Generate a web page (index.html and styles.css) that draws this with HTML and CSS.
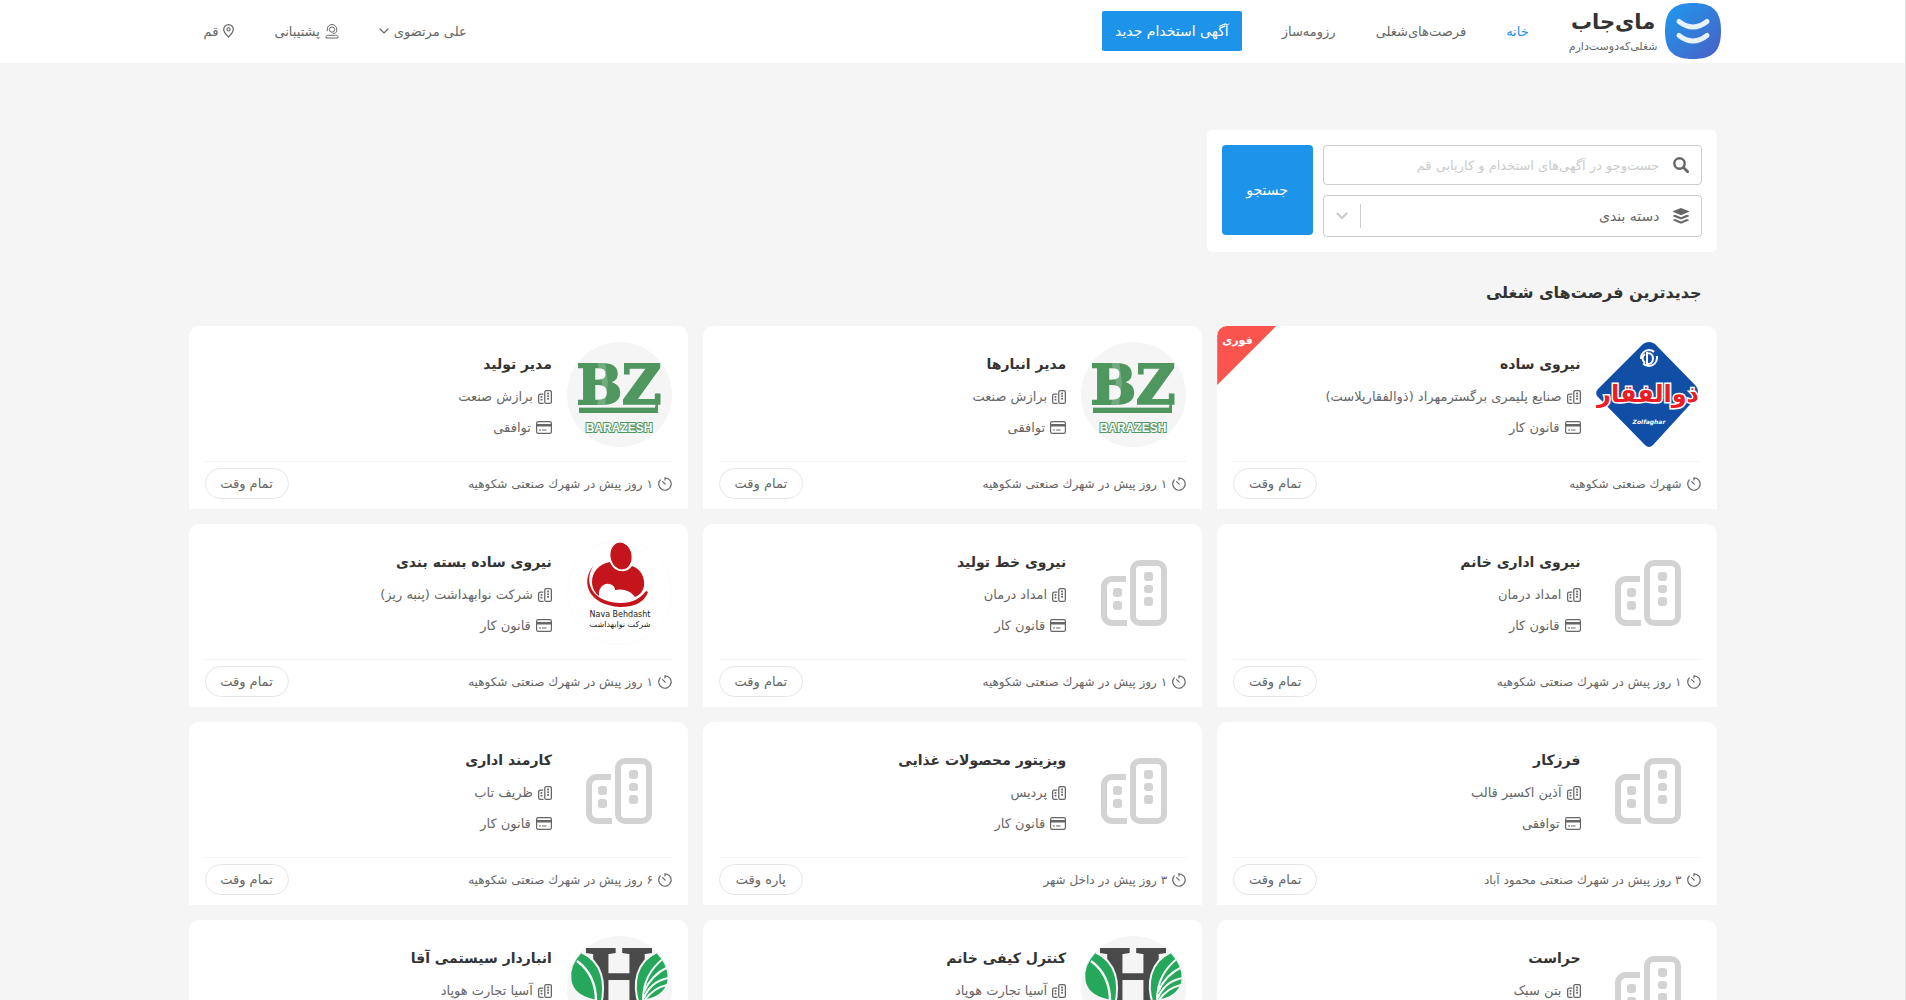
FILE: index.html
```html
<!DOCTYPE html>
<html lang="fa" dir="rtl">
  <head>
    <meta charset="UTF-8" />
    <meta name="viewport" content="width=device-width, initial-scale=1.0" />
    <title>مای‌جاب</title>
    <link rel="stylesheet" href="styles.css">
  </head>
  <body>
    <!-- icons and company logos -->
    <svg class="sprite" aria-hidden="true">
      <defs>
        <linearGradient id="brand-fill" x1="0" y1="0" x2="1" y2="1">
          <stop offset="0" stop-color="#1d9bf0" />
          <stop offset="1" stop-color="#4a5fc4" />
        </linearGradient>
        <clipPath id="round"><circle cx="52.5" cy="52.5" r="52.5" /></clipPath>
      </defs>
      <symbol id="building" viewBox="0 0 66 66">
        <g fill="none" stroke="currentColor" stroke-width="6">
          <rect x="32" y="3" width="31" height="60" rx="7" />
          <path d="M25 19H11a8 8 0 0 0-8 8v28a8 8 0 0 0 8 8h15" />
        </g>
        <g fill="currentColor">
          <rect x="43" y="12" width="9" height="9" rx="3" />
          <rect x="43" y="25" width="9" height="8" rx="3" />
          <rect x="43" y="37" width="9" height="9" rx="3" />
          <rect x="12" y="28" width="9" height="9" rx="3" />
          <rect x="12" y="41" width="9" height="9" rx="3" />
        </g>
      </symbol>
      <symbol id="card" viewBox="0 0 16 13">
        <rect x=".6" y=".6" width="14.8" height="11.8" rx="1.6" fill="none" stroke="currentColor" stroke-width="1.2" />
        <path d="M1 3h14v2.4H1zM3 8.5h2v1.1H3zM6 8.5h4.5v1.1H6z" fill="currentColor" />
      </symbol>
      <symbol id="clock" viewBox="0 0 14 14">
        <path d="M7 3V.8a6.2 6.2 0 1 1-4.7 2.1M7.2 7.2L4.6 4.6" fill="none" stroke="currentColor" stroke-width="1.2" stroke-linecap="round" />
      </symbol>
      <symbol id="pin" viewBox="0 0 11 14">
        <path d="M5.5 13.2C3.2 10.4.7 8.1.7 5.4a4.8 4.8 0 0 1 9.6 0c0 2.7-2.5 5-4.8 7.8z" fill="none" stroke="currentColor" stroke-width="1.2" />
        <circle cx="5.5" cy="5.4" r="1.6" fill="none" stroke="currentColor" stroke-width="1.1" />
      </symbol>
      <symbol id="support" viewBox="0 0 14 15">
        <g fill="none" stroke="currentColor">
          <circle cx="7" cy="5.6" r="2.6" />
          <path d="M2.3 7.2V5.2a4.7 4.7 0 0 1 9.4 0v2M11.5 7.2c0 1.4-1.5 2.3-3.5 2.3M1 14v-.6c0-1.4 1-2.1 2.4-2.1h7.2c1.4 0 2.4.7 2.4 2.1v.6z" />
        </g>
      </symbol>
      <symbol id="chevron" viewBox="0 0 10 6">
        <path d="M1 1l4 4 4-4" fill="none" stroke="currentColor" stroke-width="1.2" stroke-linecap="round" />
      </symbol>
      <symbol id="chevron-bold" viewBox="0 0 12 8">
        <path d="M1.5 1.5L6 6l4.5-4.5" fill="none" stroke="currentColor" stroke-width="2.2" stroke-linecap="round" />
      </symbol>
      <symbol id="search" viewBox="0 0 16 16">
        <circle cx="6.5" cy="6.5" r="5.2" fill="none" stroke="currentColor" stroke-width="2.4" />
        <path d="M10.5 10.5l4.2 4.2" stroke="currentColor" stroke-width="2.8" stroke-linecap="round" />
      </symbol>
      <symbol id="layers" viewBox="0 0 16 16">
        <g fill="currentColor">
          <path d="M8 0l7.6 3.1q.8.5 0 1L8 7.2.4 4.1q-.8-.5 0-1z" />
          <path d="M2 6.8l6 2.5 6-2.5 1.6.7q.8.4 0 .9L8 11.500.4 8.4q-.8-.5 0-.9z" />
          <path d="M2 11l6 2.5 6-2.5 1.6.7q.8.4 0 .9L8 15.8.4 12.6q-.8-.5 0-.9z" />
        </g>
      </symbol>
      <symbol id="brand" viewBox="0 0 56 56">
        <path d="M28 0C48 0 56 8 56 28S48 56 28 56 0 48 0 28 8 0 28 0z" fill="url(#brand-fill)" />
        <path d="M14 18.5q14 11 28 0M14 32.5q14 11 28 0" fill="none" stroke="#e8f2fc" stroke-width="5" stroke-linecap="round" />
      </symbol>
      <symbol id="diamond" viewBox="0 0 105 105">
        <path d="M47 2q6-4 12 0l41 42q4 6 0 12L57 103q-4 4-8 0L1 54q-2-4 1-7z" fill="#114fa6" />
        <circle cx="53" cy="16" r="8" fill="none" stroke="#fff" stroke-width="2" stroke-dasharray="19 5" />
        <path d="M51 10v12c8 1 8-12 0-11M49 12q-5 4 0 9" fill="none" stroke="#fff" stroke-width="2" />
      </symbol>
      <symbol id="bars" viewBox="0 0 105 105">
        <path d="M12 65.5h76l3-15v20.5H12z" fill="#4f965f" />
        <path d="M12 64.8h76" stroke="#f5f5f5" stroke-width="1" />
        <path d="M30 19h8l3 22-3 22h-8l5-22z" fill="#fff" opacity=".2" />
      </symbol>
      <symbol id="mother" viewBox="0 0 105 105">
        <circle cx="52.5" cy="52.5" r="52" fill="none" stroke="#fafafa" />
        <path d="M43 22C32 24 25 32 25 42c0 6 3 11 7 14-1-9 6-15 13-11 3 2 3 4 3 5 8-2 16 1 20 7 7-3 10-9 9-16-1-8-6-13-12-15-5 8-18 7-22-4z" fill="#c4151c" />
        <ellipse cx="54" cy="16" rx="11" ry="14" fill="#c4151c" stroke="#fff" transform="rotate(-10 54 16)" />
        <path d="M26 26c-13 17-4 39 27 41 16 0 25-6 28-15l-2-1c-6 8-14 12-25 12C29 63 15 46 26 26z" fill="#c4151c" />
      </symbol>
      <symbol id="leaves" viewBox="0 0 105 105">
        <path d="M14 16C-2 33-2 58 26 64c3 0 6 2 8 5 5-21 2-43-20-53z" fill="#25a85c" stroke="#f5f5f5" stroke-width="2" />
        <path d="M10 25q19 14 19 40" fill="none" stroke="#f5f5f5" stroke-width="2.5" />
        <path d="M90 16c16 17 18 41-10 48-3 0-6 2-8 5-7-22-3-43 18-53z" fill="#25a85c" stroke="#f5f5f5" stroke-width="2" />
        <path d="M76 64q0-26 21-42M77 56q7-17 24-25M77 62q6-16 24-20M78 64q8-12 22-15" fill="none" stroke="#f5f5f5" stroke-width="2" />
      </symbol>
    </svg>

    <header>
      <div class="header-inner">
        <a class="brand" href="#">
          <svg class="brand-mark"><use href="#brand" /></svg>
          <span class="brand-text">
            <strong>مای‌جاب</strong>
            <small>شغلی‌که‌دوست‌دارم</small>
          </span>
        </a>
        <nav>
          <a class="active" href="#">خانه</a>
          <a href="#">فرصت‌های‌شغلی</a>
          <a href="#">رزومه‌ساز</a>
        </nav>
        <button class="new-job" type="button">آگهی استخدام جدید</button>
        <div class="user-links">
          <button class="user-menu" type="button">علی مرتضوی <svg class="icon-chevron"><use href="#chevron" /></svg></button>
          <a href="#"><svg class="icon-support"><use href="#support" /></svg> پشتیبانی</a>
          <a href="#"><svg class="icon-pin"><use href="#pin" /></svg> قم</a>
        </div>
      </div>
    </header>

    <main>
      <form class="search">
        <div class="fields">
          <div class="field">
            <label for="q" aria-label="جست‌وجو"><svg class="icon-field"><use href="#search" /></svg></label>
            <input id="q" type="text" placeholder="جست‌وجو در آگهی‌های استخدام و کاریابی قم">
          </div>
          <div class="field field-select">
            <label for="category" aria-label="دسته بندی"><svg class="icon-field"><use href="#layers" /></svg></label>
            <select id="category">
              <option>دسته بندی</option>
            </select>
            <span class="arrow"><svg class="icon-arrow"><use href="#chevron-bold" /></svg></span>
          </div>
        </div>
        <button class="search-button" type="submit">جستجو</button>
      </form>

      <h1>جدیدترین فرصت‌های شغلی</h1>

      <section class="jobs">
        <article class="job">
          <span class="urgent">فوری</span>
          <div class="job-body">
            <div class="logo">
              <svg viewBox="0 0 105 105">
                <use href="#diamond" />
                <text class="logo-zolfaghar" x="52" y="60">ذوالفقار</text>
                <text class="logo-zolfaghar-en" x="53" y="82">Zolfaghar</text>
              </svg>
            </div>
            <div class="info">
              <h2>نیروی ساده</h2>
              <p><svg class="icon-building"><use href="#building" /></svg>صنایع پلیمری برگسترمهراد (ذوالفقارپلاست)</p>
              <p><svg class="icon-card"><use href="#card" /></svg>قانون کار</p>
            </div>
          </div>
          <div class="job-footer">
            <span class="time"><svg class="icon-clock"><use href="#clock" /></svg>شهرك صنعتی شکوهیه</span>
            <span class="type">تمام وقت</span>
          </div>
        </article>

        <article class="job">
          <div class="job-body">
            <div class="logo">
              <svg viewBox="0 0 105 105">
                <circle cx="52.5" cy="52.5" r="52.5" fill="#f5f5f5" />
                <text class="logo-bz" x="52" y="62">BZ</text>
                <use href="#bars" />
                <text class="logo-bz-name" x="52" y="90">BARAZESH</text>
              </svg>
            </div>
            <div class="info">
              <h2>مدیر انبارها</h2>
              <p><svg class="icon-building"><use href="#building" /></svg>برازش صنعت</p>
              <p><svg class="icon-card"><use href="#card" /></svg>توافقی</p>
            </div>
          </div>
          <div class="job-footer">
            <span class="time"><svg class="icon-clock"><use href="#clock" /></svg>۱ روز پیش در شهرك صنعتی شکوهیه</span>
            <span class="type">تمام وقت</span>
          </div>
        </article>

        <article class="job">
          <div class="job-body">
            <div class="logo">
              <svg viewBox="0 0 105 105">
                <circle cx="52.5" cy="52.5" r="52.5" fill="#f5f5f5" />
                <text class="logo-bz" x="52" y="62">BZ</text>
                <use href="#bars" />
                <text class="logo-bz-name" x="52" y="90">BARAZESH</text>
              </svg>
            </div>
            <div class="info">
              <h2>مدیر تولید</h2>
              <p><svg class="icon-building"><use href="#building" /></svg>برازش صنعت</p>
              <p><svg class="icon-card"><use href="#card" /></svg>توافقی</p>
            </div>
          </div>
          <div class="job-footer">
            <span class="time"><svg class="icon-clock"><use href="#clock" /></svg>۱ روز پیش در شهرك صنعتی شکوهیه</span>
            <span class="type">تمام وقت</span>
          </div>
        </article>

        <article class="job">
          <div class="job-body">
            <div class="logo empty"><svg><use href="#building" /></svg></div>
            <div class="info">
              <h2>نیروی اداری خانم</h2>
              <p><svg class="icon-building"><use href="#building" /></svg>امداد درمان</p>
              <p><svg class="icon-card"><use href="#card" /></svg>قانون کار</p>
            </div>
          </div>
          <div class="job-footer">
            <span class="time"><svg class="icon-clock"><use href="#clock" /></svg>۱ روز پیش در شهرك صنعتی شکوهیه</span>
            <span class="type">تمام وقت</span>
          </div>
        </article>

        <article class="job">
          <div class="job-body">
            <div class="logo empty"><svg><use href="#building" /></svg></div>
            <div class="info">
              <h2>نیروی خط تولید</h2>
              <p><svg class="icon-building"><use href="#building" /></svg>امداد درمان</p>
              <p><svg class="icon-card"><use href="#card" /></svg>قانون کار</p>
            </div>
          </div>
          <div class="job-footer">
            <span class="time"><svg class="icon-clock"><use href="#clock" /></svg>۱ روز پیش در شهرك صنعتی شکوهیه</span>
            <span class="type">تمام وقت</span>
          </div>
        </article>

        <article class="job">
          <div class="job-body">
            <div class="logo">
              <svg viewBox="0 0 105 105">
                <use href="#mother" />
                <text class="logo-nava" x="53" y="77">Nava Behdasht</text>
                <text class="logo-nava" x="53" y="87">شرکت نوابهداشت</text>
              </svg>
            </div>
            <div class="info">
              <h2>نیروی ساده بسته بندی</h2>
              <p><svg class="icon-building"><use href="#building" /></svg>شرکت نوابهداشت (پنبه ریز)</p>
              <p><svg class="icon-card"><use href="#card" /></svg>قانون کار</p>
            </div>
          </div>
          <div class="job-footer">
            <span class="time"><svg class="icon-clock"><use href="#clock" /></svg>۱ روز پیش در شهرك صنعتی شکوهیه</span>
            <span class="type">تمام وقت</span>
          </div>
        </article>

        <article class="job">
          <div class="job-body">
            <div class="logo empty"><svg><use href="#building" /></svg></div>
            <div class="info">
              <h2>فرزکار</h2>
              <p><svg class="icon-building"><use href="#building" /></svg>آذین اکسیر قالب</p>
              <p><svg class="icon-card"><use href="#card" /></svg>توافقی</p>
            </div>
          </div>
          <div class="job-footer">
            <span class="time"><svg class="icon-clock"><use href="#clock" /></svg>۳ روز پیش در شهرك صنعتی محمود آباد</span>
            <span class="type">تمام وقت</span>
          </div>
        </article>

        <article class="job">
          <div class="job-body">
            <div class="logo empty"><svg><use href="#building" /></svg></div>
            <div class="info">
              <h2>ویزیتور محصولات غذایی</h2>
              <p><svg class="icon-building"><use href="#building" /></svg>پردیس</p>
              <p><svg class="icon-card"><use href="#card" /></svg>قانون کار</p>
            </div>
          </div>
          <div class="job-footer">
            <span class="time"><svg class="icon-clock"><use href="#clock" /></svg>۳ روز پیش در داخل شهر</span>
            <span class="type">پاره وقت</span>
          </div>
        </article>

        <article class="job">
          <div class="job-body">
            <div class="logo empty"><svg><use href="#building" /></svg></div>
            <div class="info">
              <h2>کارمند اداری</h2>
              <p><svg class="icon-building"><use href="#building" /></svg>ظریف تاب</p>
              <p><svg class="icon-card"><use href="#card" /></svg>قانون کار</p>
            </div>
          </div>
          <div class="job-footer">
            <span class="time"><svg class="icon-clock"><use href="#clock" /></svg>۶ روز پیش در شهرك صنعتی شکوهیه</span>
            <span class="type">تمام وقت</span>
          </div>
        </article>

        <article class="job">
          <div class="job-body">
            <div class="logo empty"><svg><use href="#building" /></svg></div>
            <div class="info">
              <h2>حراست</h2>
              <p><svg class="icon-building"><use href="#building" /></svg>بتن سبک</p>
              <p><svg class="icon-card"><use href="#card" /></svg>قانون کار</p>
            </div>
          </div>
          <div class="job-footer">
            <span class="time"><svg class="icon-clock"><use href="#clock" /></svg>۶ روز پیش در شهرك صنعتی شکوهیه</span>
            <span class="type">تمام وقت</span>
          </div>
        </article>

        <article class="job">
          <div class="job-body">
            <div class="logo">
              <svg viewBox="0 0 105 105">
                <circle cx="52.5" cy="52.5" r="52.5" fill="#f5f5f5" />
                <text class="logo-h" x="52" y="70">H</text>
                <use href="#leaves" clip-path="url(#round)" />
              </svg>
            </div>
            <div class="info">
              <h2>کنترل کیفی خانم</h2>
              <p><svg class="icon-building"><use href="#building" /></svg>آسیا تجارت هوپاد</p>
              <p><svg class="icon-card"><use href="#card" /></svg>قانون کار</p>
            </div>
          </div>
          <div class="job-footer">
            <span class="time"><svg class="icon-clock"><use href="#clock" /></svg>۶ روز پیش در شهرك صنعتی شکوهیه</span>
            <span class="type">تمام وقت</span>
          </div>
        </article>

        <article class="job">
          <div class="job-body">
            <div class="logo">
              <svg viewBox="0 0 105 105">
                <circle cx="52.5" cy="52.5" r="52.5" fill="#f5f5f5" />
                <text class="logo-h" x="52" y="70">H</text>
                <use href="#leaves" clip-path="url(#round)" />
              </svg>
            </div>
            <div class="info">
              <h2>انباردار سیستمی آقا</h2>
              <p><svg class="icon-building"><use href="#building" /></svg>آسیا تجارت هوپاد</p>
              <p><svg class="icon-card"><use href="#card" /></svg>قانون کار</p>
            </div>
          </div>
          <div class="job-footer">
            <span class="time"><svg class="icon-clock"><use href="#clock" /></svg>۶ روز پیش در شهرك صنعتی شکوهیه</span>
            <span class="type">تمام وقت</span>
          </div>
        </article>
      </section>
    </main>
  </body>
</html>
```
FILE: styles.css
```css
* {
  box-sizing: border-box;
}
body {
  margin: 0;
  border-right: 1px solid #e0e0e0;
  background-color: #f5f5f5;
  color: #666;
  font-family: "DejaVu Sans", sans-serif;
  font-size: 13px;
}
a {
  color: inherit;
  text-decoration: none;
}
button, input, select {
  font: inherit;
  color: inherit;
  border: none;
  background: none;
  padding: 0;
  cursor: pointer;
}
svg {
  flex-shrink: 0;
}
.sprite {
  position: absolute;
  width: 0;
  height: 0;
}

/* header */
header {
  background-color: #fff;
}
.header-inner {
  display: flex;
  align-items: center;
  gap: 40px;
  max-width: 1536px;
  height: 63px;
  margin: 0 auto;
  padding-left: 19px;
  padding-bottom: 1px;
}
.brand {
  display: flex;
  align-items: center;
  gap: 7px;
}
.brand-mark {
  width: 56px;
  height: 56px;
}
.brand-text {
  display: flex;
  flex-direction: column;
  align-items: center;
}
.brand-text strong {
  font-size: 21px;
  line-height: 32px;
  color: #333;
}
.brand-text small {
  font-size: 11px;
  line-height: 18px;
}
nav {
  display: flex;
  gap: 40px;
}
nav .active {
  color: #1e93ea;
}
.new-job {
  height: 40px;
  padding: 0 13px;
  border-radius: 2px;
  background-color: #1e93ea;
  color: #fff;
  font-size: 14px;
}
.user-links {
  display: flex;
  gap: 40px;
  margin-right: auto;
}
.user-links > * {
  display: flex;
  align-items: center;
  gap: 5px;
}
.icon-chevron {
  width: 10px;
  height: 6px;
}
.icon-support {
  width: 14px;
  height: 15px;
}
.icon-pin {
  width: 11px;
  height: 14px;
}

main {
  max-width: 1528px;
  margin: 0 auto;
  padding-top: 67px;
}

/* search box */
.search {
  display: flex;
  gap: 10px;
  width: 510px;
  max-width: 100%;
  padding: 15px;
  border-radius: 5px;
  background-color: #fff;
}
.fields {
  display: flex;
  flex: 1;
  flex-direction: column;
  gap: 10px;
}
.field {
  display: flex;
  align-items: center;
  height: 40px;
  padding-right: 12px;
  border: 1px solid #ccc;
  border-radius: 4px;
}
.field-select {
  height: 42px;
}
.field label {
  display: flex;
}
.field input, .field select {
  flex: 1;
  min-width: 0;
  height: 100%;
  padding: 0 13px;
  outline: none;
  appearance: none;
}
.field input {
  cursor: text;
}
.field select {
  font-size: 14px;
}
.field input::placeholder {
  color: #ccc;
}
.icon-field {
  width: 16px;
  height: 16px;
}
.arrow {
  display: flex;
  align-items: center;
  justify-content: center;
  width: 37px;
  height: 24px;
  border-right: 1px solid #ccc;
  color: #ccc;
}
.icon-arrow {
  width: 12px;
  height: 8px;
}
.search-button {
  width: 91px;
  height: 90px;
  border-radius: 4px;
  background-color: #1e93ea;
  color: #fff;
  font-size: 14px;
}

h1 {
  margin: 24px 15px 16px;
  font-size: 16px;
  line-height: 34px;
  color: #333;
}

/* job cards */
.jobs {
  display: grid;
  grid-template-columns: repeat(3, 1fr);
  gap: 15px;
}
.job {
  position: relative;
  padding: 16px 16px 10px;
  border-radius: 10px 10px 0 0;
  background-color: #fff;
  overflow: hidden;
}
.job-body {
  display: flex;
  gap: 15px;
  padding-bottom: 14px;
  border-bottom: 1px solid #f3f3f3;
}
.logo {
  display: flex;
  align-items: center;
  justify-content: center;
  width: 105px;
  height: 105px;
}
.logo svg {
  width: 105px;
  height: 105px;
}
.logo.empty {
  color: #d3d3d3;
}
.logo.empty svg {
  width: 66px;
  height: 66px;
}
.info {
  padding-top: 5px;
}
.info h2 {
  margin: 0;
  font-size: 14px;
  line-height: 34px;
  color: #333;
}
.info p {
  display: flex;
  align-items: center;
  gap: 5px;
  margin: 0;
  line-height: 31px;
}
.icon-building {
  width: 14px;
  height: 14px;
}
.icon-card {
  width: 16px;
  height: 13px;
}
.icon-clock {
  width: 14px;
  height: 14px;
}
.job-footer {
  display: flex;
  align-items: center;
  justify-content: space-between;
  padding-top: 6px;
}
.time {
  display: flex;
  align-items: center;
  gap: 5px;
  font-size: 12px;
}
.type {
  min-width: 84px;
  border: 1px solid #e6e6e6;
  border-radius: 16px;
  line-height: 29px;
  text-align: center;
}
.urgent {
  position: absolute;
  top: 0;
  left: 0;
  width: 59px;
  height: 59px;
  padding: 2px 5px;
  background-color: #fa544e;
  clip-path: polygon(0 0, 100% 0, 0 100%);
  color: #fff;
  font-size: 11px;
  font-weight: bold;
  line-height: 26px;
  text-align: left;
}

/* text inside the company logos */
.logo text {
  text-anchor: middle;
}
.logo-zolfaghar {
  fill: #ec1c24;
  stroke: #fff;
  stroke-width: 3px;
  paint-order: stroke;
  font-size: 24px;
  font-weight: bold;
}
.logo-zolfaghar-en {
  fill: #fff;
  font: italic bold 6px "DejaVu Sans", sans-serif;
}
.logo-bz {
  fill: #4f965f;
  stroke: #4f965f;
  stroke-width: 2px;
  font: bold 54px "DejaVu Serif", serif;
}
.logo-bz-name {
  fill: #fff;
  stroke: #4f965f;
  stroke-width: 2px;
  paint-order: stroke;
  font: bold 12px "Liberation Sans", sans-serif;
}
.logo-nava {
  fill: #222;
  font-size: 8px;
}
.logo-h {
  fill: #4a4a4a;
  stroke: #4a4a4a;
  stroke-width: 2px;
  font: bold 86px "Liberation Serif", serif;
}
```
